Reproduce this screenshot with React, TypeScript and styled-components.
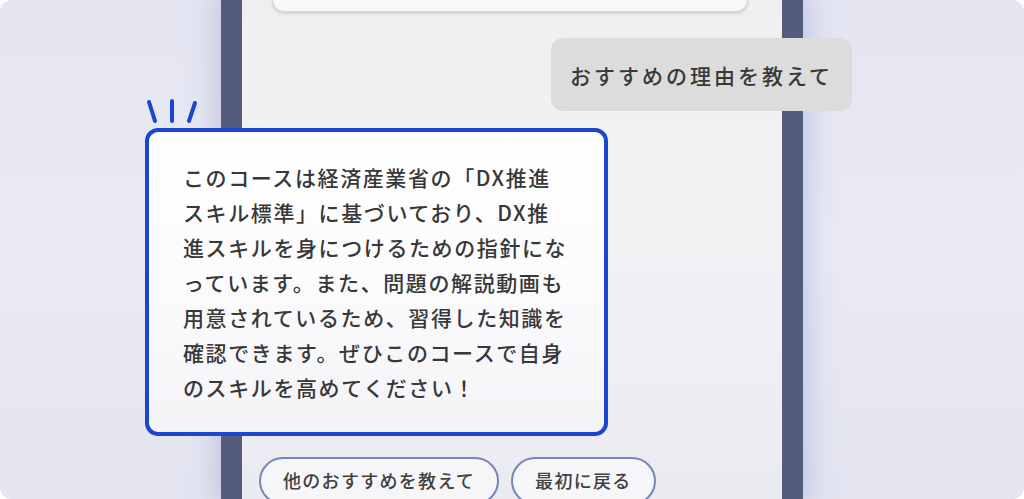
import * as React from 'react';
import styled, { createGlobalStyle } from 'styled-components';

const GlobalStyle = createGlobalStyle`
  html, body {
    margin: 0;
    padding: 0;
    background: #ffffff;
  }
  body {
    font-family: 'Noto Sans CJK JP', 'Noto Sans', sans-serif;
    color: #333333;
  }
`;

const answerLines = [
  'このコースは経済産業省の「DX推進',
  'スキル標準」に基づいており、DX推',
  '進スキルを身につけるための指針にな',
  'っています。また、問題の解説動画も',
  '用意されているため、習得した知識を',
  '確認できます。ぜひこのコースで自身',
  'のスキルを高めてください！',
];

const quickReplies = ['他のおすすめを教えて', '最初に戻る'];

const App = () => {
  return (
    <>
      <GlobalStyle />
      <Canvas>
        <Phone>
          <PrevCard />
          <UserBubble>おすすめの理由を教えて</UserBubble>
          <Answer>
            <Sparks width="56" height="26" viewBox="0 0 56 26">
              <path d="M4 3 L10 22" />
              <path d="M27 2 L27 22" />
              <path d="M50 4 L44 22" />
            </Sparks>
            {answerLines.map((line) => (
              <AnswerLine key={line}>{line}</AnswerLine>
            ))}
          </Answer>
          <ReplyRow>
            {quickReplies.map((label) => (
              <ReplyButton key={label}>{label}</ReplyButton>
            ))}
          </ReplyRow>
        </Phone>
      </Canvas>
    </>
  );
};

export default App;

const Canvas = styled.div`
  width: 1024px;
  height: 499px;
  border-radius: 12px;
  overflow: hidden;
  background: linear-gradient(180deg, #e4e5f1 0%, #e9eaf4 50%, #e3e4f0 100%);
  display: flex;
  justify-content: center;
`;

const Phone = styled.div`
  width: 540px;
  height: 499px;
  flex-shrink: 0;
  border-left: 21px solid #535d7b;
  border-right: 21px solid #535d7b;
  background: linear-gradient(180deg, #efeff1 0%, #f2f2f5 45%, #eaeaf1 100%);
  box-shadow: 0 0 26px 6px rgba(150, 160, 205, 0.45);
  display: flex;
  flex-direction: column;
  align-items: flex-start;
`;

const PrevCard = styled.div`
  width: 476px;
  height: 60px;
  margin: -48px 0 0 30px;
  flex-shrink: 0;
  box-sizing: border-box;
  background: #f8f8f9;
  border: 1px solid #d4d4d8;
  border-radius: 12px;
  box-shadow: 0 2px 3px rgba(0, 0, 0, 0.12);
`;

const UserBubble = styled.div`
  align-self: flex-end;
  margin: 26px -70px 0 0;
  width: 301px;
  height: 73px;
  flex-shrink: 0;
  box-sizing: border-box;
  padding-left: 19px;
  display: flex;
  align-items: center;
  background: #dcdcdc;
  border-radius: 12px;
  font-size: 21px;
  font-weight: 500;
  letter-spacing: 3px;
  color: #383838;
  position: relative;
  z-index: 2;
`;

const Answer = styled.div`
  position: relative;
  z-index: 2;
  margin: 17px 0 0 -97px;
  width: 463px;
  height: 308px;
  flex-shrink: 0;
  box-sizing: border-box;
  padding: 28px 0 0 34px;
  border: 4px solid #1b46cf;
  border-radius: 13px;
  background: linear-gradient(180deg, #ffffff 0%, #fbfbfc 50%, #f4f4f8 100%);
`;

const Sparks = styled.svg`
  position: absolute;
  left: -4px;
  top: -33px;
  fill: none;
  stroke: #1b46cf;
  stroke-width: 4;
  stroke-linecap: round;
`;

const AnswerLine = styled.div`
  font-size: 21px;
  font-weight: 500;
  line-height: 35px;
  letter-spacing: 1.6px;
  white-space: nowrap;
  color: #383838;
`;

const ReplyRow = styled.div`
  display: flex;
  gap: 12px;
  margin: 21px 0 0 17px;
`;

const ReplyButton = styled.button`
  height: 48px;
  padding: 0 22px 2px;
  box-sizing: border-box;
  border: 2px solid #7587b3;
  border-radius: 24px;
  background: #f6f6f9;
  font-family: 'Noto Sans CJK JP', 'Noto Sans', sans-serif;
  font-size: 18px;
  font-weight: 500;
  letter-spacing: 1.3px;
  color: #404040;
  white-space: nowrap;
`;
